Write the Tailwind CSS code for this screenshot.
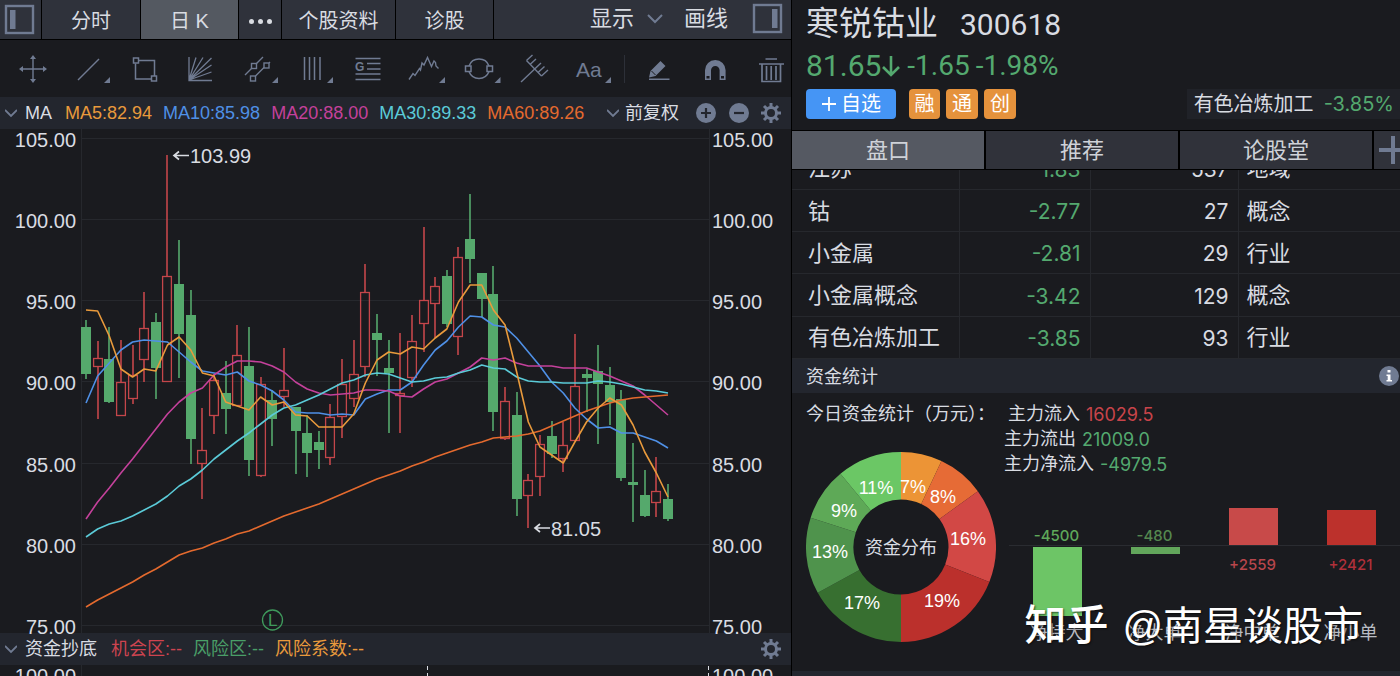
<!DOCTYPE html>
<html lang="zh-CN">
<head>
<meta charset="utf-8">
<title>寒锐钴业 300618</title>
<script src="https://cdn.jsdelivr.net/npm/@tailwindcss/browser@4"></script>
</head>
<body class="bg-[#1a1b1f] text-[#d9dce2] font-['Liberation_Sans','Noto_Sans_CJK_SC',sans-serif] overflow-hidden">
<div class="grid grid-cols-[792fr_608fr] h-screen overflow-hidden">

  <!-- Chart panel -->
  <section class="min-w-0 flex flex-col overflow-hidden border-r border-black">
    <nav class="flex shrink-0 h-10 bg-[#2f323b] border-b border-black text-[20px] leading-none">
      <button class="w-[42px] border-r border-black flex items-center pl-1" aria-label="左侧栏">
        <svg class="w-[31px] h-[31px]" viewBox="0 0 31 31"><rect x="2" y="2" width="27" height="27" fill="none" stroke="#707b92" stroke-width="2.4"/><rect x="6" y="6" width="5.500" height="19" fill="#707b92"/></svg>
      </button>
      <button class="w-[99px] border-r border-black pt-[2px]">分时</button>
      <button class="w-[98px] border-r border-black bg-[#545961] pt-[2px]">日 K</button>
      <button class="w-[43px] border-r border-black flex items-center justify-center gap-1 pt-1" aria-label="更多">
        <span class="w-[5px] h-[5px] rounded-full bg-[#d9dce2]"></span><span class="w-[5px] h-[5px] rounded-full bg-[#d9dce2]"></span><span class="w-[5px] h-[5px] rounded-full bg-[#d9dce2]"></span>
      </button>
      <button class="w-[114px] border-r border-black pt-[2px]">个股资料</button>
      <button class="w-[98px] border-r border-black pt-[2px]">诊股</button>
      <div class="ml-auto flex items-center pr-2 text-[22px] pb-[2px]">
        <label class="relative flex items-center">
          <select class="appearance-none bg-transparent pr-7 outline-none" aria-label="显示"><option>显示</option></select>
          <svg class="absolute right-0 w-4 h-3" viewBox="0 0 16 12"><path d="M1 2l7 7 7-7" fill="none" stroke="#707b92" stroke-width="2"/></svg>
        </label>
        <button class="ml-[21px]">画线</button>
        <button class="ml-6" aria-label="右侧栏">
          <svg class="w-[31px] h-[31px]" viewBox="0 0 31 31"><rect x="2" y="2" width="27" height="27" fill="none" stroke="#707b92" stroke-width="2.4"/><rect x="20" y="6" width="5.500" height="19" fill="#707b92"/></svg>
        </button>
      </div>
    </nav>

    <!-- Drawing tools -->
    <div class="flex shrink-0 h-[57px] items-center text-[#707b92] pl-[5px]">
      <div class="grid grid-cols-11 flex-1 h-10">
        <button aria-label="移动" class="flex justify-center"><svg class="w-12 h-10" viewBox="9 49 48 40" fill="none" stroke="currentColor" stroke-width="1.400"><path d="M33 57v24M21 69h24"/><path d="M33 55l-3 4h6zM33 83l-3-4h6zM19 69l4-3v6zM47 69l-4-3v6z" fill="currentColor" stroke="none"/></svg></button>
        <button aria-label="线段" class="flex justify-center"><svg class="w-12 h-10" viewBox="65 49 48 40" fill="none" stroke="currentColor" stroke-width="1.400"><path d="M78 80L99 59"/><path d="M104 83h6v-6z" fill="currentColor" stroke="none"/></svg></button>
        <button aria-label="矩形" class="flex justify-center"><svg class="w-12 h-10" viewBox="120 49 48 40" fill="none" stroke="currentColor" stroke-width="1.500"><path d="M138 60.500h15.500v15.500M134.500 63.500v15.500h15.500"/><rect x="132.500" y="58" width="5" height="5"/><rect x="150.500" y="76" width="5" height="5"/></svg></button>
        <button aria-label="扇形线" class="flex justify-center"><svg class="w-12 h-10" viewBox="176 49 48 40" fill="none" stroke="currentColor" stroke-width="1.300"><path d="M188 57v23.500h23M188 80L195 57.500M188 80L202 57.500M188 80L210.500 58M188 80L210.500 65M188 80L210.500 72"/></svg></button>
        <button aria-label="通道线" class="flex justify-center"><svg class="w-12 h-10" viewBox="232 49 48 40" fill="none" stroke="currentColor" stroke-width="1.400"><path d="M244 75l6.500-6.500M255.500 63.500l6.500-6.500M254.500 76l8.500-8.500M268 63l1-1"/><rect x="250.500" y="63.500" width="5" height="5"/><rect x="263" y="63" width="5" height="5"/><rect x="249.500" y="76" width="5" height="5"/><path d="M271 83h6v-6z" fill="currentColor" stroke="none"/></svg></button>
        <button aria-label="周期线" class="flex justify-center"><svg class="w-12 h-10" viewBox="287 49 48 40" fill="none" stroke="currentColor" stroke-width="1.500"><path d="M303.500 57v23M308.500 57v23M313.500 57v23M319 57v23"/><path d="M326 83h6v-6z" fill="currentColor" stroke="none"/></svg></button>
        <button aria-label="黄金分割" class="flex justify-center"><svg class="w-12 h-10" viewBox="343 49 48 40" fill="none" stroke="currentColor" stroke-width="1.500"><path d="M354.500 58.500h25M366 63.500h13.500M366 69h13.500M354.500 74h25M354.500 79.500h25"/><text x="354" y="71" font-size="12" font-weight="700" fill="currentColor" stroke="none">G</text></svg></button>
        <button aria-label="波浪线" class="flex justify-center"><svg class="w-12 h-10" viewBox="399 49 48 40" fill="none" stroke="currentColor" stroke-width="1.400"><path d="M408 79.500l4-6 2 2 4.500-7 1 1.500 1.500-7 2 2 3.500-7.500 4 9 2.500-5.500 1.500 1.500.5 3.500 2.500 2.500"/><path d="M438 83h6v-6z" fill="currentColor" stroke="none"/></svg></button>
        <button aria-label="圆" class="flex justify-center"><svg class="w-12 h-10" viewBox="455 49 48 40" fill="none" stroke="currentColor" stroke-width="1.500"><path d="M468 66a10.700 10.700 0 0 1 20 0M468 71.500a10.700 10.700 0 0 0 20 0"/><rect x="464.500" y="66" width="5.500" height="5.500"/><rect x="486" y="66" width="5.500" height="5.500"/><path d="M493.500 83h6v-6z" fill="currentColor" stroke="none"/></svg></button>
        <button aria-label="叉形线" class="flex justify-center"><svg class="w-12 h-10" viewBox="511 49 48 40" fill="none" stroke="currentColor" stroke-width="1.400"><path d="M520 82l20-19M525.500 60.500l15 15.500M525.500 60.500l6-5.500M529 64.500l6-5.500M537 72.500l6.500-6M540.500 76l6.500-6"/></svg></button>
        <button aria-label="文字" class="flex justify-center"><svg class="w-12 h-10" viewBox="568 49 48 40"><text x="576" y="77" font-size="21" fill="currentColor">Aa</text><path d="M605 83h6v-6z" fill="currentColor"/></svg></button>
      </div>
      <div class="w-px h-7 bg-[#2d3038] ml-1"></div>
      <div class="flex h-10 w-[166px] shrink-0 justify-between pl-5 pr-[6px]">
        <button aria-label="画笔"><svg class="w-7 h-10" viewBox="645 49 28 40" fill="currentColor"><path d="M649 77.500l1.500-6.500 10-10 5 5-10 10zM649 78.500h20.500v1.500h-20.500z"/><path d="M651.500 71l4 4" stroke="#1a1b1f" stroke-width="1"/></svg></button>
        <button aria-label="磁铁"><svg class="w-7 h-10" viewBox="701 49 28 40"><path d="M708 80V70.300a7.300 7.300 0 0 1 14.600 0V80" fill="none" stroke="currentColor" stroke-width="6"/><path d="M706.500 76h3v2.500h-3zM721 76h3v2.500h-3z" fill="#1a1b1f"/></svg></button>
        <button aria-label="删除"><svg class="w-7 h-10" viewBox="757 49 28 40" fill="none" stroke="currentColor" stroke-width="1.700"><path d="M765.500 59h11.500M759 64h25M762 64v17.500h18.500V64M766.500 66v14M771.200 66v14M776 66v14"/></svg></button>
      </div>
    </div>

    <!-- Moving averages -->
    <div class="flex shrink-0 h-8 items-center bg-[#23262e] pl-[5px] pr-[10px] text-[18px] leading-none whitespace-nowrap">
      <svg class="w-3 h-3 mr-2" viewBox="0 0 12 12"><path d="M0 3l6 6 6-6" fill="none" stroke="#707b92" stroke-width="1.800"/></svg>
      <span class="mr-[13px]">MA</span>
      <div class="flex gap-[11px]">
        <span class="text-[#e99a3c]">MA5:82.94</span>
        <span class="text-[#4f90e6]">MA10:85.98</span>
        <span class="text-[#c4419b]">MA20:88.00</span>
        <span class="text-[#5bcbd8]">MA30:89.33</span>
        <span class="text-[#e46a2e]">MA60:89.26</span>
      </div>
      <label class="relative flex items-center ml-auto">
        <svg class="absolute left-0 w-3 h-3" viewBox="0 0 12 12"><path d="M0 3l6 6 6-6" fill="none" stroke="#707b92" stroke-width="1.800"/></svg>
        <select class="appearance-none bg-transparent pl-[18px] outline-none" aria-label="复权方式"><option>前复权</option></select>
      </label>
      <button class="ml-[17px]" aria-label="放大"><svg class="w-5 h-5" viewBox="0 0 20 20"><circle cx="10" cy="10" r="10" fill="#707b92"/><path d="M5 10h10M10 5v10" stroke="#23262e" stroke-width="2.200"/></svg></button>
      <button class="ml-[13px]" aria-label="缩小"><svg class="w-5 h-5" viewBox="0 0 20 20"><circle cx="10" cy="10" r="10" fill="#707b92"/><path d="M5 10h10" stroke="#23262e" stroke-width="2.200"/></svg></button>
      <button class="ml-3" aria-label="指标设置"><svg class="w-5 h-5" viewBox="0 0 20 20"><circle cx="10" cy="10" r="5.500" fill="none" stroke="#707b92" stroke-width="3"/><path d="M10 0v4M10 16v4M0 10h4M16 10h4M3 3l2.800 2.800M14.200 14.200L17 17M17 3l-2.800 2.800M5.800 14.200L3 17" stroke="#707b92" stroke-width="3"/></svg></button>
    </div>

    <!-- Candlesticks; user units start at y = 129 -->
    <svg id="kline" class="relative z-10 overflow-visible w-full shrink-0 block" viewBox="0 129 791 504" role="img" aria-label="日K线图" font-size="20" fill="#d9dce2">
      <g id="grid" stroke="#26282d"></g>
      <g id="axis"></g>
      <g id="candles"></g>
      <g id="lines" fill="none" stroke-width="1.600" stroke-linejoin="round"></g>
      <path d="M174 155.500h15M179 151.500l-5 4 5 4" fill="none" stroke="#d9dce2" stroke-width="1.700"/>
      <text x="190" y="163">103.99</text>
      <path d="M535 528h15M540 524l-5 4 5 4" fill="none" stroke="#d9dce2" stroke-width="1.700"/>
      <text x="551" y="536">81.05</text>
      <circle cx="272.500" cy="620" r="10" fill="none" stroke="#3f9a5c" stroke-width="1.300"/>
      <text x="268" y="626" font-size="17" fill="#3f9a5c">L</text>
    </svg>

    <div class="flex shrink-0 h-8 items-center bg-[#23262e] pl-[5px] pr-[10px] text-[18px] leading-none whitespace-nowrap">
      <svg class="w-3 h-3 mr-2" viewBox="0 0 12 12"><path d="M0 3l6 6 6-6" fill="none" stroke="#707b92" stroke-width="1.800"/></svg>
      <span class="mr-[14px]">资金抄底</span>
      <div class="flex gap-[11px]">
        <span class="text-[#cd4450]">机会区:--</span>
        <span class="text-[#4a9f68]">风险区:--</span>
        <span class="text-[#e99a3c]">风险系数:--</span>
      </div>
      <button class="ml-auto" aria-label="指标设置"><svg class="w-5 h-5" viewBox="0 0 20 20"><circle cx="10" cy="10" r="5.500" fill="none" stroke="#707b92" stroke-width="3"/><path d="M10 0v4M10 16v4M0 10h4M16 10h4M3 3l2.800 2.800M14.200 14.200L17 17M17 3l-2.800 2.800M5.800 14.200L3 17" stroke="#707b92" stroke-width="3"/></svg></button>
    </div>
    <svg class="w-full shrink-0 block" viewBox="0 665 791 60" font-size="20" fill="#d9dce2">
      <path d="M81.500 665v60" stroke="#26282d"/>
      <path d="M427.500 666v60M708.500 666v60" stroke="#d9dce2" stroke-dasharray="4 3"/>
      <text x="76" y="683" text-anchor="end">100.00</text><text x="712" y="683">100.00</text>
    </svg>
  </section>

  <!-- Quote panel -->
  <section class="relative min-w-0 flex flex-col overflow-hidden">
    <header class="shrink-0 pl-[14px] h-[130px]">
      <h1 class="flex items-center gap-[22px] h-[46px] text-[33px] leading-none"><span>寒锐钴业</span><span class="text-[30px] pt-1 font-['Roboto']">300618</span></h1>
      <div class="flex items-center gap-[6px] h-10 text-[#54a96f] font-['Roboto'] leading-none"><span class="flex items-center text-[30px]">81.65<svg class="w-5 h-7" viewBox="0 0 20 28"><path d="M10 4v19M2 15l8 8 8-8" fill="none" stroke="#54a96f" stroke-width="2.600"/></svg></span><span class="text-[28px]">-1.65</span><span class="text-[28px]">-1.98%</span></div>
      <div class="flex items-center h-[30px] mt-[3px] text-[20px] leading-none text-white">
        <button class="flex items-center justify-center gap-1 w-[90px] h-[30px] rounded-sm bg-[#4595f5]"><svg class="w-4 h-4" viewBox="0 0 16 16"><path d="M1 8h14M8 1v14" stroke="#fff" stroke-width="1.800"/></svg>自选</button>
        <span class="ml-[13px] w-[31px] h-[30px] rounded-sm bg-[#e5923c] flex items-center justify-center">融</span>
        <span class="ml-[6px] w-[32px] h-[30px] rounded-sm bg-[#e5923c] flex items-center justify-center">通</span>
        <span class="ml-[6px] w-[32px] h-[30px] rounded-sm bg-[#e5923c] flex items-center justify-center">创</span>
        <a href="#" class="ml-auto h-[30px] bg-[#202228] flex items-center gap-[10px] pl-[7px] pr-[6px] text-[#d9dce2]">有色冶炼加工<span class="text-[#54a96f] font-['Inter']">-3.85%</span></a>
      </div>
    </header>
    <nav class="shrink-0 flex h-10 bg-[#30323a] border-y border-black text-[22px] leading-none text-[#cfd2d8]">
      <button class="flex-1 border-r-2 border-black bg-[#555962] pt-[2px]">盘口</button>
      <button class="flex-1 border-r-2 border-black pt-[2px]">推荐</button>
      <button class="flex-1 border-r-2 border-black pt-[2px]">论股堂</button>
      <button class="w-[26px] overflow-hidden pl-[5px] text-left" aria-label="添加"><svg class="w-7 h-7 max-w-none" viewBox="0 0 28 28"><path d="M0 14h28M14 0v28" stroke="#707b92" stroke-width="4"/></svg></button>
    </nav>
    <div class="shrink-0 h-[189px] overflow-hidden flex items-end">
      <table class="w-full h-[211px] table-fixed border-collapse text-[22px] leading-none">
        <colgroup><col class="w-[167px]"><col class="w-[131px]"><col class="w-[148px]"><col></colgroup>
        <tbody class="[&_td]:border-b [&_td]:border-r [&_td]:border-[#26282d] [&_td]:p-0 [&_td]:pt-[2px] [&_td:first-child]:pl-4 [&_td:last-child]:pl-2 [&_td:last-child]:border-r-0 [&_td:nth-child(2)]:text-right [&_td:nth-child(2)]:pr-[9px] [&_td:nth-child(2)]:text-[#54a96f] [&_td:nth-child(3)]:text-right [&_td:nth-child(3)]:pr-[9px] [&_td:nth-child(2)]:text-[21px] [&_td:nth-child(3)]:text-[21px] [&_td:nth-child(2)]:font-['Inter'] [&_td:nth-child(3)]:font-['Inter']">
          <tr><td>江苏</td><td>-1.83</td><td>537</td><td>地域</td></tr>
          <tr><td>钴</td><td>-2.77</td><td>27</td><td>概念</td></tr>
          <tr><td>小金属</td><td>-2.81</td><td>29</td><td>行业</td></tr>
          <tr><td>小金属概念</td><td>-3.42</td><td>129</td><td>概念</td></tr>
          <tr><td>有色冶炼加工</td><td>-3.85</td><td>93</td><td>行业</td></tr>
        </tbody>
      </table>
    </div>
    <div class="shrink-0 flex items-center justify-between h-[34px] bg-[#23262e] pl-[14px] pr-px">
      <h2 class="text-[18px] leading-none pt-[2px]">资金统计</h2>
      <button aria-label="说明"><svg class="w-5 h-5" viewBox="0 0 20 20"><circle cx="10" cy="10" r="10" fill="#707b92"/><path d="M8.500 4h3v2.500h-3zM7.500 8.500h4v5.500h1.500v1.500h-5.500V14h1.200v-4H7.500z" fill="#fff"/></svg></button>
    </div>
    <div class="shrink-0 flex h-[278px] pl-[14px] pt-[9px] text-[18px] leading-[25px] whitespace-nowrap">
      <div class="w-[198px] shrink-0">
        <p class="h-[25px]">今日资金统计（万元）：</p>
        <svg id="donut" class="w-[190px] h-[190px] mt-[25px]" viewBox="-95 -95 190 190" role="img" aria-label="资金分布"></svg>
      </div>
      <div class="flex-1 min-w-0">
        <p class="h-[25px] ml-1 flex gap-[6px]">主力流入<span class="text-[#c8444a] font-['Inter']">16029.5</span></p>
        <p class="h-[25px] flex gap-[6px]">主力流出<span class="text-[#54a96f] font-['Inter']">21009.0</span></p>
        <p class="h-[25px] flex gap-[6px]">主力净流入<span class="text-[#54a96f] font-['Inter']">-4979.5</span></p>
        <svg id="flow" class="w-full block" viewBox="1004 477 396 194" role="img" aria-label="净流入"></svg>
      </div>
    </div>
    <div class="flex-1 bg-[#23262e]"></div>
    <div class="absolute right-[37px] bottom-[29px] flex items-center gap-[14px] text-white text-[40px] leading-none whitespace-nowrap [text-shadow:1px_1px_2px_rgba(0,0,0,0.6)]"><span class="font-medium text-[42px]">知乎</span><span>@南星谈股市</span></div>
  </section>
</div>

<script>
const NS = 'http://www.w3.org/2000/svg';
function add(parent, tag, attrs, text) {
  const el = document.createElementNS(NS, tag);
  for (const k in attrs) el.setAttribute(k, attrs[k]);
  if (text !== undefined) el.textContent = text;
  (typeof parent === 'string' ? document.getElementById(parent) : parent).appendChild(el);
}
const GREEN = '#55a96c', RED = '#c4464a';
const px = i => 86 + 11.64 * i;

for (let k = 0; k < 7; k++) {
  const y = 138.5 + 81.33 * k, label = (105 - 5 * k).toFixed(2);
  add('grid', 'path', { d: `M81 ${Math.round(y) - .5}H709` });
  add('axis', 'text', { x: 76, y: y + 8, 'text-anchor': 'end' }, label);
  add('axis', 'text', { x: 712, y: y + 8 }, label);
}
add('grid', 'path', { d: 'M81.5 129V633M709.5 129V633' });

// direction, high, low, body top, body bottom
const candles = [
['g',320,379,327,374],['r',341,419,358,367],['g',327,403,359,402],['r',340,416,382,416],['r',345,404,375,399],
['r',292,382,328,360],['g',313,399,322,368],['r',155,382,276,382],['g',240,378,284,334],['g',290,464,315,439],
['r',408,499,450,464],['r',374,434,380,416],['g',361,434,393,409],['r',325,406,355,406],['g',327,476,366,460],
['r',377,477,384,476],['g',390,446,400,419],['r',348,407,390,397],['g',407,474,407,431],['g',415,477,433,453],
['g',431,469,442,450],['r',404,465,417,458],['r',359,438,384,417],['r',340,407,374,399],['r',264,377,292,367],
['g',314,376,333,340],['g',340,433,368,373],['r',333,433,393,396],['r',315,387,341,378],['r',227,352,300,324],
['r',277,338,286,304],['g',270,327,276,324],['r',247,355,257,337],['g',194,283,239,259],['g',273,317,273,299],
['g',266,431,294,412],['r',387,440,401,439],['g',392,516,415,499],['r',474,528,480,496],['r',435,496,444,477],
['g',421,458,436,454],['r',422,472,445,459],['r',334,441,386,441],['g',369,412,374,378],['g',345,444,371,384],
['g',367,425,385,402],['g',390,481,399,478],['g',443,522,482,485],['g',470,517,495,516],['r',457,517,491,503],['g',484,521,499,519]];
candles.forEach(([c, h, l, t, b], i) => {
  const x = Math.round(px(i)), col = c === 'g' ? GREEN : RED;
  if (c === 'g') {
    add('candles', 'path', { d: `M${x} ${h}V${l}`, stroke: col, 'stroke-width': 1.6 });
    add('candles', 'rect', { x: x - 5, y: t, width: 10, height: b - t, fill: col });
  } else {
    add('candles', 'path', { d: `M${x} ${h}V${t}M${x} ${b}V${l}`, stroke: col, 'stroke-width': 1.6 });
    add('candles', 'rect', { x: x - 4.4, y: t + .5, width: 8.8, height: Math.max(b - t - 1, 1), fill: 'none', stroke: col, 'stroke-width': 1.3 });
  }
});

const series = [
['#4f90e6',[403,376,363,350,342,340,341,342,352,362,371,373,375,372,381,385,391,400,412,413,413,415,414,415,399,394,390,390,382,365,350,341,327,316,317,325,327,338,352,366,382,393,408,419,428,427,433,433,437,441,448]],
['#c4419b',[519,502,488,473,459,444,429,414,402,393,388,375,367,361,361,362,366,372,382,389,393,395,394,393,390,390,391,396,397,389,382,379,373,367,358,360,358,363,366,366,366,368,368,368,372,376,381,386,395,405,415]],
['#5bcbd8',[537,529,524,521,516,510,504,496,486,479,470,459,450,441,433,424,415,408,405,400,395,389,383,380,375,373,374,378,382,381,378,377,373,370,365,368,369,377,381,382,382,383,383,383,381,382,384,387,390,391,393]],
['#e46a2e',[607,600,594,588,582,575,569,562,555,551,548,543,539,534,531,526,521,516,512,508,504,499,494,489,484,479,475,471,466,462,457,453,449,445,442,438,437,436,434,431,426,421,416,411,407,403,400,398,397,396,395]],
['#e99a3c',[310,311,336,369,377,369,371,345,337,350,373,376,402,406,410,397,405,402,415,416,427,427,427,414,383,360,352,354,347,349,338,329,302,285,285,310,325,372,422,447,455,463,442,422,408,398,405,425,452,473,497]]];
series.forEach(([stroke, ys]) => add('lines', 'polyline', { stroke, points: ys.map((y, i) => px(i) + ',' + y).join(' ') }));

// share, colour, label centre
const slices = [[7,'#ec9436',12,-60],[8,'#e66b36',42,-50],[16,'#d24845',67,-8],[19,'#bb302c',41,54],
[17,'#376f30',-39,56],[13,'#4f934c',-71,5],[9,'#5ea957',-57,-36],[11,'#6bc765',-25,-59]];
let a = 0;
slices.forEach(([v, fill]) => {
  const b = a + v / 100 * 2 * Math.PI, p = (r, t) => `${r * Math.sin(t)} ${-r * Math.cos(t)}`;
  add('donut', 'path', { fill, d: `M${p(95, a)}A95 95 0 0 1 ${p(95, b)}L${p(47.5, b)}A47.5 47.5 0 0 0 ${p(47.5, a)}Z` });
  a = b;
});
slices.forEach(([v, , x, y]) => add('donut', 'text', { x, y: y + 6, 'text-anchor': 'middle', 'font-size': 18, fill: '#fff' }, v + '%'));
add('donut', 'text', { x: 0, y: 7, 'text-anchor': 'middle', 'font-size': 18, fill: '#d9dce2' }, '资金分布');

add('flow', 'path', { d: 'M1009 545.5H1400', stroke: '#2a2c31' });
[[1057.5,547,69,'#6dc566','-4500',541,'净特大','#5fa95a'],[1155.5,547,7,'#62a65b','-480',541,'净大单','#55884f'],
 [1253.5,508,37,'#c84a49','+2559',570,'净中单','#b8464c'],[1351.5,510,35,'#bc312c','+2421',570,'净小单','#b0303a']]
.forEach(([x, y, h, fill, v, ty, name, tc]) => {
  add('flow', 'rect', { x: x - 24.5, y, width: 49, height: h, fill });
  add('flow', 'text', { x: x - 1, y: ty, 'text-anchor': 'middle', 'font-size': 15, 'font-family': 'Inter', 'font-weight': 500, fill: tc }, v);
  add('flow', 'text', { x: x - 1, y: 639, 'text-anchor': 'middle', 'font-size': 18, fill: '#b9bcc3' }, name);
});
</script>
</body>
</html>
